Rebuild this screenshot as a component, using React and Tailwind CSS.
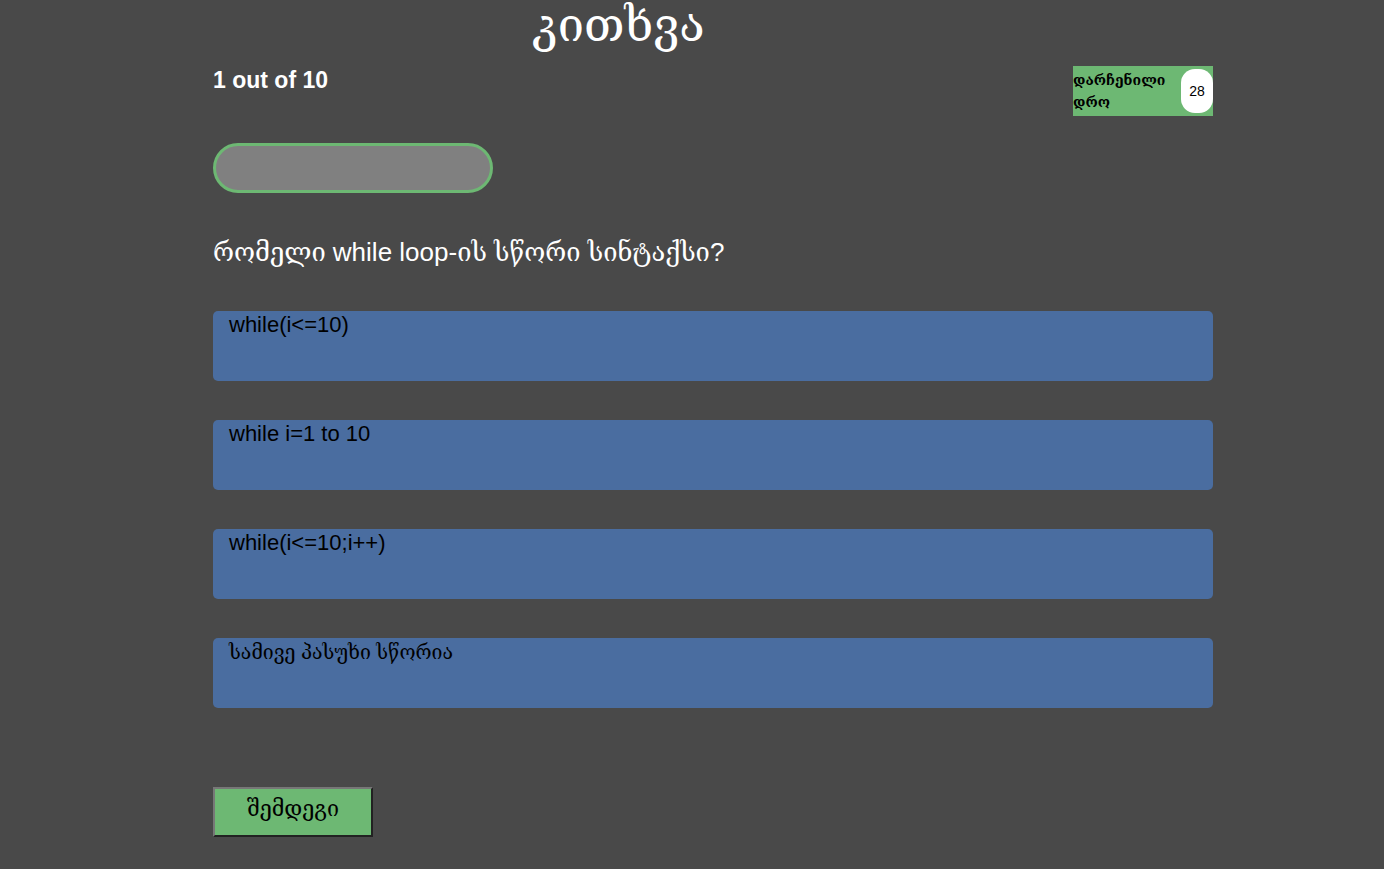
const options = [
  { text: 'while(i<=10)', size: 'text-[22px]' },
  { text: 'while i=1 to 10', size: 'text-[22px]' },
  { text: 'while(i<=10;i++)', size: 'text-[22px]' },
  { text: 'სამივე პასუხი სწორია', size: 'text-[19.5px]' },
];

const App = () => {
  return (
    <div className="min-h-[869px] bg-[#494949] pt-[1px] font-['Liberation_Sans','DejaVu_Serif',serif]">
      <div className="w-[1000px] ml-[213px]">
        {/* Title */}
        <h1 className="text-[47px] leading-[51px] text-white pl-[319px] -mt-[2px]">კითხვა</h1>

        {/* Counter + Timer */}
        <div className="flex justify-between items-start mt-[16px]">
          <p className="text-[23px] font-bold text-white leading-[28px]">1 out of 10</p>
          <div className="flex items-center justify-between bg-[#6db873] w-[140px] h-[50px]">
            <span className="text-[14px] leading-[22px] font-bold text-black w-[100px]">დარჩენილი დრო</span>
            <div className="flex items-center justify-center w-[32px] h-[44px] bg-white rounded-[14px] text-[14px] text-black">28</div>
          </div>
        </div>

        {/* Progress */}
        <div className="w-[280px] h-[50px] mt-[27px] rounded-full border-[3px] border-[#6db873] bg-[#808080]" />

        {/* Question */}
        <h2 className="text-[26px] leading-[32px] text-white mt-[43px]">
          <span className="text-[25.5px]">რომელი </span>while loop-<span className="text-[25.5px]">ის სწორი სინტაქსი</span>?
        </h2>

        {/* Answers */}
        <div className="flex flex-col gap-[39px] mt-[43px]">
          {options.map((opt) => (
            <div key={opt.text} className={`h-[70px] bg-[#4a6da0] rounded-[5px] px-[16px] pt-[1px] ${opt.size} leading-[26px] text-black`}>
              {opt.text}
            </div>
          ))}
        </div>

        {/* Next */}
        <button className="mt-[79px] w-[160px] h-[50px] bg-[#6db873] text-[21.5px] text-black border-[2px] border-t-[#777] border-l-[#777] border-b-[#222] border-r-[#222] pb-[6px]">
          შემდეგი
        </button>
      </div>
    </div>
  );
};

export default App;
